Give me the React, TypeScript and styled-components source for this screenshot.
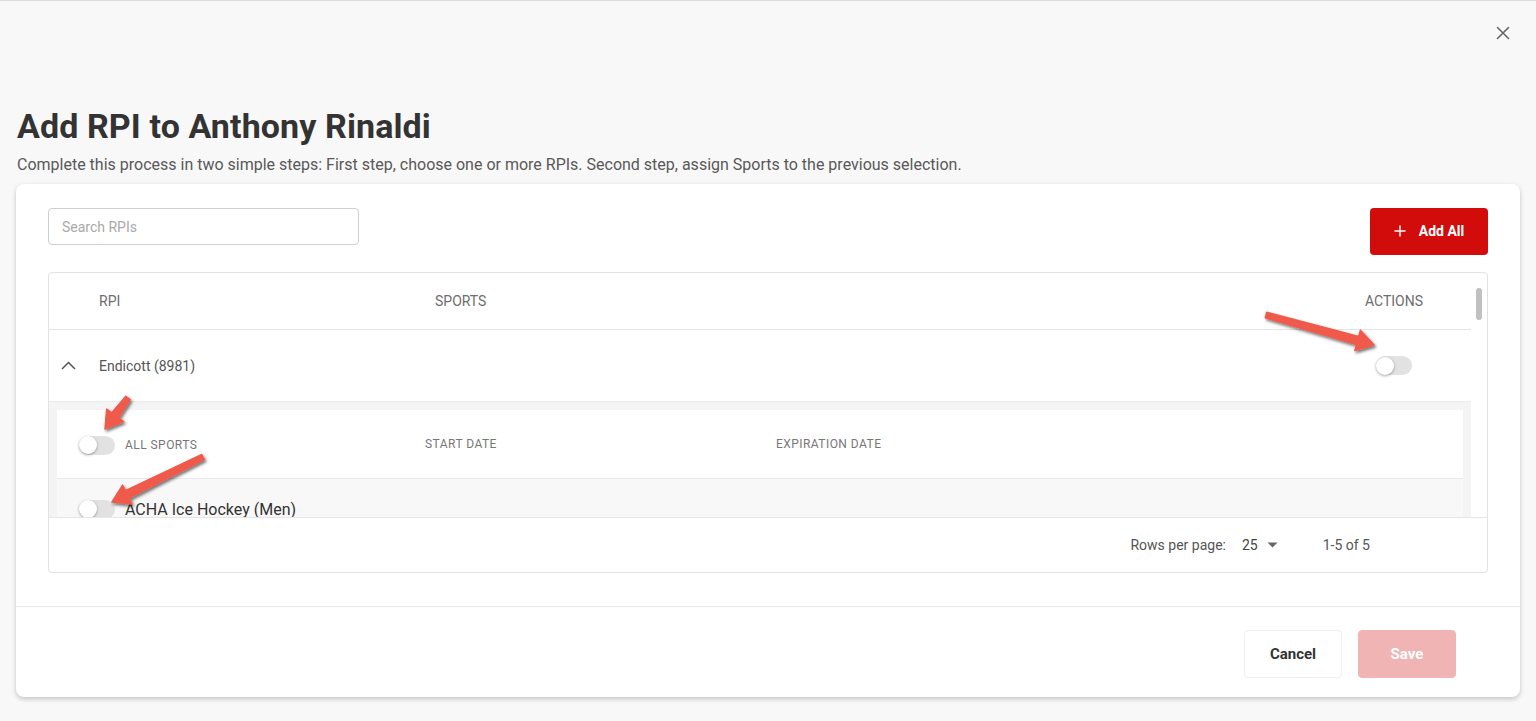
import React from "react";
import styled, { createGlobalStyle } from "styled-components";

const GlobalStyle = createGlobalStyle`
  html, body { margin: 0; padding: 0; background: #f8f8f8; }
  body { font-family: Roboto, "Liberation Sans", Arial, sans-serif; color: #333; }
  * { box-sizing: border-box; }
`;

const Page = styled.div`
  position: relative;
  min-height: 721px;
  border-top: 1px solid #dcdcdc;
  padding: 0 16px;
  overflow: hidden;
`;

const TopBar = styled.div`
  display: flex;
  justify-content: flex-end;
  align-items: flex-start;
  height: 105px;
  margin: 0 -16px;
  padding: 20px 21px 0;
`;

const CloseButton = styled.button`
  width: 24px;
  height: 24px;
  border: none;
  background: transparent;
  padding: 0;
  display: flex;
  align-items: center;
  justify-content: center;
  cursor: pointer;
`;

const Title = styled.h1`
  margin: 0 0 0 1px;
  font-family: Roboto, "Liberation Sans", sans-serif;
  font-weight: 700;
  font-size: 34px;
  line-height: 40px;
  letter-spacing: 0.1px;
  color: #333;
`;

const Subtitle = styled.p`
  margin: 9px 0 0 1px;
  font-size: 16px;
  line-height: 20px;
  color: #595959;
`;

const Card = styled.div`
  margin-top: 9px;
  background: #fff;
  border-radius: 8px;
  box-shadow: 0 2px 5px rgba(0, 0, 0, 0.22);
  display: flex;
  flex-direction: column;
`;

const Body = styled.div`
  padding: 24px 32px 33px;
`;

const Toolbar = styled.div`
  display: flex;
  justify-content: space-between;
  align-items: flex-start;
`;

const SearchInput = styled.input`
  width: 311px;
  height: 37px;
  border: 1px solid #cfcfcf;
  border-radius: 4px;
  padding: 0 13px;
  font-family: Roboto, "Liberation Sans", sans-serif;
  font-size: 14px;
  color: #333;
  outline: none;
  &::placeholder { color: #a9a9a9; }
`;

const AddAllButton = styled.button`
  width: 118px;
  height: 47px;
  border: none;
  border-radius: 4px;
  background: #d20b0b;
  color: #fff;
  font-family: Roboto, "Liberation Sans", sans-serif;
  font-weight: 700;
  font-size: 14px;
  display: flex;
  align-items: center;
  justify-content: center;
  gap: 13px;
  padding: 0 0 1px;
  cursor: pointer;
`;

const Table = styled.div`
  margin-top: 17px;
  height: 301px;
  border: 1px solid #e2e2e2;
  border-radius: 4px;
  display: flex;
  flex-direction: column;
`;

const ScrollRegion = styled.div`
  display: flex;
  height: 245px;
  overflow: hidden;
  border-bottom: 1px solid #e6e6e6;
`;

const ScrollContent = styled.div`
  flex: 1;
  min-width: 0;
`;

const ScrollTrack = styled.div`
  width: 16px;
  display: flex;
  justify-content: center;
  padding-top: 15px;
`;

const ScrollThumb = styled.div`
  width: 6px;
  height: 32px;
  border-radius: 3px;
  background: #c1c1c1;
`;

const GridRow = styled.div<{ $height: number; $line: string }>`
  display: grid;
  grid-template-columns: 50px 336px 1fr 86px;
  padding-right: 34px;
  height: ${(p) => p.$height}px;
  align-items: center;
  border-bottom: 1px solid ${(p) => p.$line};
`;

const HeaderCell = styled.div<{ $center?: boolean }>`
  font-size: 14px;
  color: #6d6d6d;
  text-align: ${(p) => (p.$center ? "center" : "left")};
  padding-bottom: 1px;
`;

const Cell = styled.div<{ $center?: boolean }>`
  display: flex;
  align-items: center;
  justify-content: ${(p) => (p.$center ? "center" : "flex-start")};
  font-size: 14px;
  color: #555;
`;

const ChevronCell = styled.div`
  display: flex;
  align-items: center;
  padding-left: 12px;
`;

const SubPanel = styled.div`
  background: #f4f4f4;
  padding: 8px 8px 0;
`;

const SubHeader = styled.div`
  background: #fff;
  height: 69px;
  display: grid;
  grid-template-columns: 346px 351px 1fr;
  padding-left: 22px;
  align-items: center;
  border-bottom: 1px solid #e9e9e9;
`;

const SubLabel = styled.div`
  display: flex;
  align-items: center;
  gap: 10px;
  padding-top: 2px;
`;

const SubHeaderText = styled.span`
  font-size: 12px;
  letter-spacing: 0.45px;
  color: #777;
  text-transform: uppercase;
`;

const SportRow = styled.div`
  background: #f8f8f8;
  height: 60px;
  display: flex;
  align-items: center;
  gap: 10px;
  padding-left: 22px;
  font-size: 16px;
  color: #333;
`;

const Pagination = styled.div`
  flex: 1;
  display: flex;
  align-items: center;
  justify-content: flex-end;
  padding-right: 117px;
  font-size: 14px;
  color: #555;
`;

const RowsSelect = styled.div`
  margin-left: 16px;
  display: flex;
  align-items: center;
  gap: 9px;
  color: #444;
`;

const RangeText = styled.span`
  margin-left: 45px;
  color: #555;
`;

const Footer = styled.div`
  border-top: 1px solid #ececec;
  padding: 23px 64px 19px;
  display: flex;
  justify-content: flex-end;
  gap: 16px;
`;

const FooterButton = styled.button<{ $primary?: boolean }>`
  width: 98px;
  height: 48px;
  border-radius: 4px;
  border: 1px solid ${(p) => (p.$primary ? "#f1b4b4" : "#efefef")};
  background: ${(p) => (p.$primary ? "#f1b4b4" : "#fff")};
  color: ${(p) => (p.$primary ? "#fff" : "#333")};
  font-family: Roboto, "Liberation Sans", sans-serif;
  font-weight: 700;
  font-size: 15px;
  cursor: pointer;
`;

const ToggleTrack = styled.span`
  position: relative;
  display: inline-block;
  width: 36px;
  height: 19px;
  border-radius: 10px;
  background: #e2e2e2;
  flex-shrink: 0;
`;

const ToggleKnob = styled.span`
  position: absolute;
  left: 0;
  top: 0.5px;
  width: 18px;
  height: 18px;
  border-radius: 50%;
  background: #fff;
  box-shadow: 0 1px 3px rgba(0, 0, 0, 0.35);
`;

const Overlay = styled.svg`
  position: absolute;
  top: -1px;
  left: 0;
  pointer-events: none;
  z-index: 10;
`;

const Toggle = () => (
  <ToggleTrack>
    <ToggleKnob />
  </ToggleTrack>
);

type Pt = [number, number];

function arrowPoints(tail: Pt, tip: Pt): string {
  const [x1, y1] = tail;
  const [x2, y2] = tip;
  const len = Math.hypot(x2 - x1, y2 - y1);
  const ux = (x2 - x1) / len;
  const uy = (y2 - y1) / len;
  const nx = -uy;
  const ny = ux;
  const hl = 17;
  const hw = 10.5;
  const s0 = 2.8;
  const s1 = 4.2;
  const bx = x2 - ux * hl;
  const by = y2 - uy * hl;
  const pts: Pt[] = [
    [x1 + nx * s0, y1 + ny * s0],
    [bx + nx * s1, by + ny * s1],
    [bx + nx * hw, by + ny * hw],
    [x2, y2],
    [bx - nx * hw, by - ny * hw],
    [bx - nx * s1, by - ny * s1],
    [x1 - nx * s0, y1 - ny * s0],
  ];
  return pts.map((p) => `${p[0].toFixed(1)},${p[1].toFixed(1)}`).join(" ");
}

const arrows: [Pt, Pt][] = [
  [[1266, 315], [1374, 345]],
  [[128, 398], [105, 429]],
  [[203, 457], [112, 502]],
];

export default function App() {
  return (
    <>
      <GlobalStyle />
      <Page>
        <TopBar>
          <CloseButton aria-label="Close">
            <svg width="14" height="14" viewBox="0 0 14 14">
              <path d="M1.5 1.5 L12.5 12.5 M12.5 1.5 L1.5 12.5" stroke="#666" strokeWidth="1.6" strokeLinecap="round" />
            </svg>
          </CloseButton>
        </TopBar>
        <Title>Add RPI to Anthony Rinaldi</Title>
        <Subtitle>
          Complete this process in two simple steps: First step, choose one or more RPIs. Second step, assign Sports to the previous selection.
        </Subtitle>
        <Card>
          <Body>
            <Toolbar>
              <SearchInput placeholder="Search RPIs" />
              <AddAllButton>
                <svg width="12" height="12" viewBox="0 0 12 12">
                  <path d="M6 0.5 V11.5 M0.5 6 H11.5" stroke="#fff" strokeWidth="1.4" />
                </svg>
                Add All
              </AddAllButton>
            </Toolbar>
            <Table>
              <ScrollRegion>
                <ScrollContent>
                  <GridRow $height={57} $line="#e3e3e3">
                    <span />
                    <HeaderCell>RPI</HeaderCell>
                    <HeaderCell>SPORTS</HeaderCell>
                    <HeaderCell $center>ACTIONS</HeaderCell>
                  </GridRow>
                  <GridRow $height={72} $line="#ececec">
                    <ChevronCell>
                      <svg width="15" height="9" viewBox="0 0 15 9">
                        <path d="M1 8 L7.5 1.5 L14 8" fill="none" stroke="#555" strokeWidth="1.5" />
                      </svg>
                    </ChevronCell>
                    <Cell>Endicott (8981)</Cell>
                    <Cell />
                    <Cell $center>
                      <Toggle />
                    </Cell>
                  </GridRow>
                  <SubPanel>
                    <SubHeader>
                      <SubLabel>
                        <Toggle />
                        <SubHeaderText>All Sports</SubHeaderText>
                      </SubLabel>
                      <SubHeaderText>Start Date</SubHeaderText>
                      <SubHeaderText>Expiration Date</SubHeaderText>
                    </SubHeader>
                    <SportRow>
                      <Toggle />
                      ACHA Ice Hockey (Men)
                    </SportRow>
                  </SubPanel>
                </ScrollContent>
                <ScrollTrack>
                  <ScrollThumb />
                </ScrollTrack>
              </ScrollRegion>
              <Pagination>
                Rows per page:
                <RowsSelect>
                  25
                  <svg width="11" height="6" viewBox="0 0 11 6">
                    <path d="M0.5 0.5 L10.5 0.5 L5.5 5.5 Z" fill="#666" />
                  </svg>
                </RowsSelect>
                <RangeText>1-5 of 5</RangeText>
              </Pagination>
            </Table>
          </Body>
          <Footer>
            <FooterButton>Cancel</FooterButton>
            <FooterButton $primary>Save</FooterButton>
          </Footer>
        </Card>
        <Overlay width="1536" height="721" viewBox="0 0 1536 721">
          <defs>
            <filter id="arrowShadow" x="-20%" y="-20%" width="140%" height="140%">
              <feDropShadow dx="1.5" dy="2" stdDeviation="1.6" floodColor="#000" floodOpacity="0.55" />
            </filter>
          </defs>
          {arrows.map(([tail, tip], i) => (
            <polygon
              key={i}
              points={arrowPoints(tail, tip)}
              fill="#ef5a4c"
              stroke="#ef5a4c"
              strokeWidth="1.5"
              strokeLinejoin="round"
              filter="url(#arrowShadow)"
            />
          ))}
        </Overlay>
      </Page>
    </>
  );
}
